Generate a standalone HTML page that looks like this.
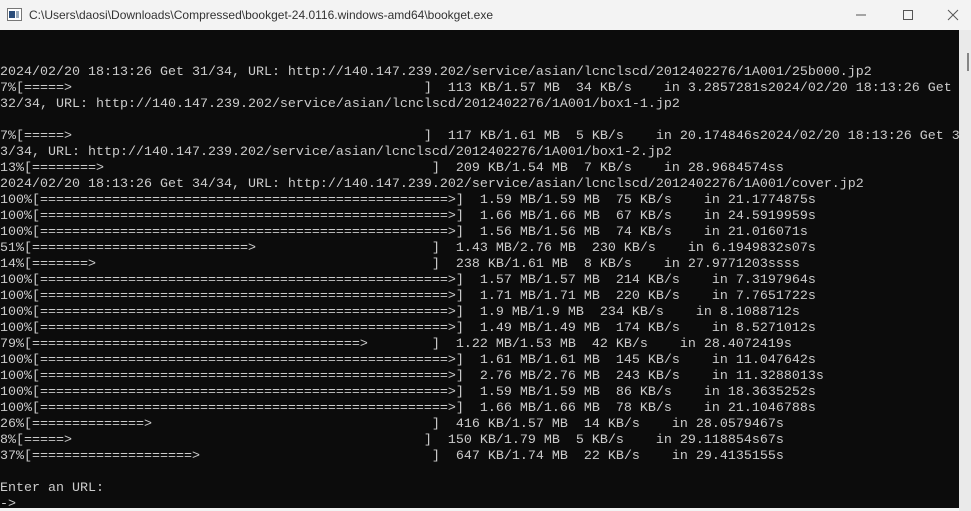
<!DOCTYPE html>
<html><head><meta charset="utf-8"><style>
html,body{margin:0;padding:0;width:971px;height:511px;overflow:hidden;background:#f3f3f3}
#title{position:absolute;left:0;top:0;width:971px;height:30px;background:#f3f3f3;font-family:"Liberation Sans",sans-serif;font-size:12px;color:#333}
#title .t{position:absolute;left:29px;top:8px;white-space:nowrap}
#icon{position:absolute;left:7px;top:8px;width:13px;height:11px;border:1px solid #777;background:#fff}
#icon:before{content:"";position:absolute;left:1px;top:2px;width:6px;height:7px;background:#2a4d7a}
#icon:after{content:"";position:absolute;left:8px;top:2px;width:3px;height:7px;background:#9ab}
#term{position:absolute;left:0;top:30px;width:959px;height:478px;background:#0c0c0c;overflow:hidden}
pre{margin:0;padding-top:3px;font-family:"Liberation Mono",monospace;font-size:13.333px;line-height:16px;color:#cccccc;white-space:pre}
#sb{position:absolute;left:959px;top:30px;width:12px;height:481px;background:#eaeaea}
#thumb{position:absolute;left:967px;top:53px;width:2px;height:18px;background:#858585}
</style></head><body>
<div id="title"><div id="icon"></div><div class="t">C:\Users\daosi\Downloads\Compressed\bookget-24.0116.windows-amd64\bookget.exe</div>
<svg style="position:absolute;left:850px;top:8px" width="110" height="14" viewBox="0 0 110 14">
<line x1="6" y1="7" x2="16" y2="7" stroke="#555" stroke-width="1"/>
<rect x="53.5" y="2.5" width="9" height="9" fill="none" stroke="#555" stroke-width="1"/>
<line x1="98" y1="2" x2="108" y2="12" stroke="#555"/><line x1="108" y1="2" x2="98" y2="12" stroke="#555"/>
</svg></div>
<div id="term"><pre>


2024/02/20 18:13:26 Get 31/34, URL: http://140.147.239.202/service/asian/lcnclscd/2012402276/1A001/25b000.jp2
7%[=====>                                            ]  113 KB/1.57 MB  34 KB/s    in 3.2857281s2024/02/20 18:13:26 Get
32/34, URL: http://140.147.239.202/service/asian/lcnclscd/2012402276/1A001/box1-1.jp2

7%[=====>                                            ]  117 KB/1.61 MB  5 KB/s    in 20.174846s2024/02/20 18:13:26 Get 3
3/34, URL: http://140.147.239.202/service/asian/lcnclscd/2012402276/1A001/box1-2.jp2
13%[========>                                         ]  209 KB/1.54 MB  7 KB/s    in 28.9684574ss
2024/02/20 18:13:26 Get 34/34, URL: http://140.147.239.202/service/asian/lcnclscd/2012402276/1A001/cover.jp2
100%[===================================================>]  1.59 MB/1.59 MB  75 KB/s    in 21.1774875s
100%[===================================================>]  1.66 MB/1.66 MB  67 KB/s    in 24.5919959s
100%[===================================================>]  1.56 MB/1.56 MB  74 KB/s    in 21.016071s
51%[===========================>                      ]  1.43 MB/2.76 MB  230 KB/s    in 6.1949832s07s
14%[=======>                                          ]  238 KB/1.61 MB  8 KB/s    in 27.9771203ssss
100%[===================================================>]  1.57 MB/1.57 MB  214 KB/s    in 7.3197964s
100%[===================================================>]  1.71 MB/1.71 MB  220 KB/s    in 7.7651722s
100%[===================================================>]  1.9 MB/1.9 MB  234 KB/s    in 8.1088712s
100%[===================================================>]  1.49 MB/1.49 MB  174 KB/s    in 8.5271012s
79%[=========================================>        ]  1.22 MB/1.53 MB  42 KB/s    in 28.4072419s
100%[===================================================>]  1.61 MB/1.61 MB  145 KB/s    in 11.047642s
100%[===================================================>]  2.76 MB/2.76 MB  243 KB/s    in 11.3288013s
100%[===================================================>]  1.59 MB/1.59 MB  86 KB/s    in 18.3635252s
100%[===================================================>]  1.66 MB/1.66 MB  78 KB/s    in 21.1046788s
26%[==============>                                   ]  416 KB/1.57 MB  14 KB/s    in 28.0579467s
8%[=====>                                            ]  150 KB/1.79 MB  5 KB/s    in 29.118854s67s
37%[====================>                             ]  647 KB/1.74 MB  22 KB/s    in 29.4135155s

Enter an URL:
-&gt;</pre></div>
<div id="sb"></div><div id="thumb"></div>
</body></html>
